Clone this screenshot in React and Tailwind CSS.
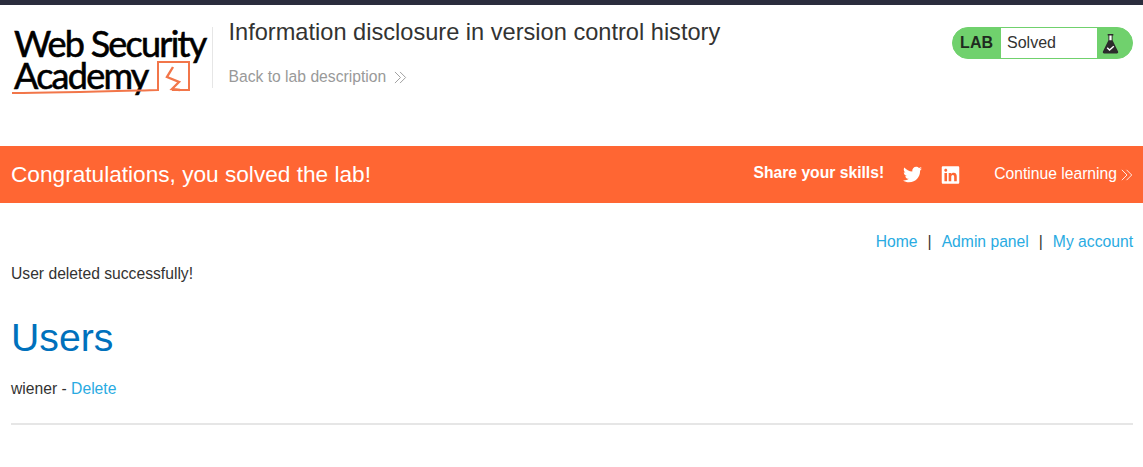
import React from 'react';
import { FaTwitter, FaLinkedin } from 'react-icons/fa';

// double chevron used next to header links
const Chevrons = ({ className }) => (
    <svg className={className} viewBox="0 0 14 14" fill="none" stroke="currentColor" strokeWidth="1">
        <path d="M1 1l6 6-6 6" />
        <path d="M6.5 1l6 6-6 6" />
    </svg>
);

const Logo = () => (
    <div className="relative w-[202px] h-[61px] border-r border-[#e6e6e6] font-['Lato',sans-serif] text-black">
        <div className="pl-[3px] text-[36px] leading-[32px] tracking-[-1.75px] whitespace-nowrap [-webkit-text-stroke:0.6px_black]">
            <div>Web Security</div>
            <div>Academy</div>
        </div>
        <svg className="absolute left-0 top-[30px] w-[182px] h-[38px]" viewBox="0 0 182 38" fill="none" stroke="#f2764a">
            <path d="M1 36 C50 36 110 34 147 33 V5 H178 V33 L161 33" strokeWidth="2" />
            <path d="M162 10 L156 20 L168 25 L161 32 L169 33" strokeWidth="2.4" />
        </svg>
    </div>
);

const LabStatus = () => (
    <div className="flex h-[32px] w-[181px] rounded-[16px] overflow-hidden border border-[#70d16d] bg-[#70d16d] text-[16px]">
        <div className="w-[48px] flex items-center justify-end font-bold text-[#1f2b1f] pr-[8px]">LAB</div>
        <div className="w-[96px] bg-white text-[#333332] flex items-center pl-[6px]">Solved</div>
        <div className="flex-1 flex items-center pl-[5px]">
            <svg width="17" height="21" viewBox="0 0 18 22">
                <path d="M6 1h6v1.5h-.8v5L17 19.5c.5 1.2-.2 2-1.2 2H2.2c-1 0-1.700-.8-1.200-2L6.800 7.500v-5H6z" fill="#2b2b2b" />
                <path d="M7.800 2.500h2.400v5H7.800z" fill="#fff" />
                <path d="M5.500 15.500l2.500 2.500 4.500-4" stroke="#fff" strokeWidth="1.500" fill="none" />
            </svg>
        </div>
    </div>
);

export default function App() {
    return (
        <div className="min-h-[467px] bg-white font-['Liberation_Sans',Arial,sans-serif] text-[15.68px] text-[#333332]">
            <div className="h-[5px] bg-[#2b2d3d]" />

            {/* Lab header */}
            <div className="h-[141px] flex items-start pl-[11px] pr-[10px]">
                <div className="pt-[22px]"><Logo /></div>
                <div className="pl-[15.500px] flex-1">
                    <h2 className="text-[23.6px] leading-[28px] pt-[13px] text-[#333332]">Information disclosure in version control history</h2>
                    <a className="flex items-center gap-[8px] mt-[22px] leading-[18px] text-[#999999]">
                        Back to lab description
                        <Chevrons className="w-[13px] h-[13px]" />
                    </a>
                </div>
                <div className="pt-[22px]"><LabStatus /></div>
            </div>

            {/* Solved banner */}
            <div className="h-[57px] bg-[#ff6633] text-white flex items-center pl-[11px] pr-[10px]">
                <h4 className="text-[22.65px] flex-1">Congratulations, you solved the lab!</h4>
                <span className="font-bold mb-[3px]">Share your skills!</span>
                <FaTwitter className="ml-[19px] w-[19px] h-[19px]" />
                <FaLinkedin className="ml-[19px] w-[19px] h-[20px]" />
                <a className="ml-[34px] mb-[1px]">Continue learning</a>
                <Chevrons className="ml-[4px] w-[12px] h-[12px]" />
            </div>

            {/* Page content */}
            <div className="pl-[11px] pr-[10px]">
                <div className="flex justify-end gap-[10px] pt-[29px] leading-[19px]">
                    <a className="text-[#29abe2]">Home</a>
                    <span>|</span>
                    <a className="text-[#29abe2]">Admin panel</a>
                    <span>|</span>
                    <a className="text-[#29abe2]">My account</a>
                </div>
                <p className="mt-[13px] leading-[19px]">User deleted successfully!</p>
                <h1 className="mt-[32px] text-[39.2px] leading-[46px] text-[#0071bc]">Users</h1>
                <p className="mt-[18px] leading-[19px]">wiener - <a className="text-[#29abe2]">Delete</a></p>
                <hr className="mt-[25px] border-t-2 border-[#e6e6e6]" />
            </div>
        </div>
    );
}
